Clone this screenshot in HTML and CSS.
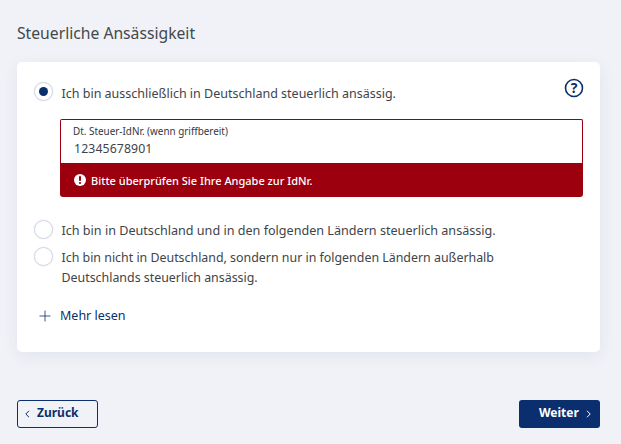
FILE: index.html
```html
<!DOCTYPE html>
<html lang="de">
<head>
<meta charset="utf-8">
<title>Steuerliche Ansässigkeit</title>
<link rel="stylesheet" href="styles.css">
</head>
<body>
<main class="page">
  <h1 class="title">Steuerliche Ansässigkeit</h1>
  <section class="card">
    <div class="option first">
      <span class="radio checked"><span class="dot"></span></span>
      <span class="label">Ich bin ausschließlich in Deutschland steuerlich ansässig.</span>
      <svg class="help" width="20" height="20" viewBox="0 0 20 20"><circle cx="10" cy="10" r="8.5" fill="none" stroke="#0b2f6e" stroke-width="1.6"/><text x="10" y="15" text-anchor="middle" class="help-mark">?</text></svg>
    </div>
    <div class="field-wrap">
      <div class="field">
        <div class="field-label">Dt. Steuer-IdNr. (wenn griffbereit)</div>
        <div class="field-value">12345678901</div>
      </div>
      <div class="error">
        <svg width="14" height="14" viewBox="0 0 14 14"><circle cx="7" cy="7" r="6" fill="#fff"/><rect x="6" y="3" width="2" height="5" rx="1" fill="#9c000e"/><circle cx="7" cy="10" r="1.1" fill="#9c000e"/></svg>
        <span>Bitte überprüfen Sie Ihre Angabe zur IdNr.</span>
      </div>
    </div>
    <div class="option second">
      <span class="radio"></span>
      <span class="label">Ich bin in Deutschland und in den folgenden Ländern steuerlich ansässig.</span>
    </div>
    <div class="option third">
      <span class="radio"></span>
      <span class="label">Ich bin nicht in Deutschland, sondern nur in folgenden Ländern außerhalb<br>Deutschlands steuerlich ansässig.</span>
    </div>
    <a class="more" href="#">
      <svg width="12" height="12" viewBox="0 0 12 12"><path d="M6 .5v11M.5 6h11" stroke="#0b2f6e" stroke-width=".8" fill="none"/></svg>
      <span>Mehr lesen</span>
    </a>
  </section>
  <div class="actions">
    <button class="btn back"><svg width="5" height="8" viewBox="0 0 5 8"><path d="M4 .8.8 4 4 7.2" fill="none" stroke="#0b2f6e"/></svg><span>Zurück</span></button>
    <button class="btn next"><span>Weiter</span><svg width="5" height="8" viewBox="0 0 5 8"><path d="M1 .8 4.2 4 1 7.2" fill="none" stroke="#fff"/></svg></button>
  </div>
</main>
</body>
</html>
```
FILE: styles.css
```css
* { box-sizing: border-box; }
html, body { margin: 0; height: 100%; }
body { background: #f1f2f7; font-family: "Noto Sans", "Open Sans", sans-serif; color: #404448; overflow: hidden; }
.page { padding: 22px 21px 0 17px; }
.title { margin: 0 0 18px; font-size: 15.7px; line-height: 22px; font-weight: 400; color: #44484c; }
.card { height: 290px; background: #fff; border-radius: 5px; box-shadow: 0 4px 16px rgba(30, 50, 110, .07); padding: 20px 17px 0; position: relative; }
.option { display: flex; align-items: flex-start; gap: 8.5px; font-size: 12.5px; line-height: 21px; }
.first { height: 37px; }
.first .label { padding-top: 1px; }
.second { margin-top: 23px; height: 27px; font-size: 12.6px; }
.third { font-size: 12.4px; line-height: 20px; }
.third .label { padding-top: 1px; }
.radio { width: 19px; height: 19px; flex: none; border-radius: 50%; border: 1px solid #cfd5e4; background: #fff; display: flex; align-items: center; justify-content: center; box-shadow: 0 0 2px rgba(30, 50, 110, .1); }
.dot { width: 9px; height: 9px; border-radius: 50%; background: #0b2f6e; }
.help { position: absolute; right: 16px; top: 16px; }
.help-mark { font-size: 14px; font-weight: 700; fill: #0b2f6e; }
.field-wrap { margin-left: 26px; width: 523px; }
.field { height: 44px; border: 1px solid #9c000e; border-bottom: 0; border-radius: 2px 2px 0 0; padding: 5px 12px 0; }
.field-label { font-size: 9.9px; line-height: 13px; color: #33373b; }
.field-value { font-size: 12.3px; line-height: 18px; margin-top: 2px; padding-left: 1px; letter-spacing: .1px; }
.error { height: 34px; background: #9c000e; border-radius: 0 0 3px 3px; color: #fff; display: flex; align-items: center; gap: 4px; padding: 0 13px; font-size: 11px; font-weight: 500; }
.more { display: flex; align-items: center; gap: 9px; margin: 18px 0 0 5px; color: #0b2f6e; font-size: 12.5px; line-height: 20px; text-decoration: none; }
.actions { display: flex; justify-content: space-between; margin-top: 48px; }
.btn { width: 81px; height: 28px; border-radius: 3px; font: 700 12px "Noto Sans", sans-serif; display: flex; align-items: center; gap: 7px; cursor: pointer; padding: 0 0 3px; }
.btn svg { margin-top: 3px; }
.back { background: transparent; border: 1px solid #0b2f6e; color: #0b2f6e; padding-left: 7px; }
.next { background: #0b2f6e; border: 0; color: #fff; padding-left: 20px; }
```
